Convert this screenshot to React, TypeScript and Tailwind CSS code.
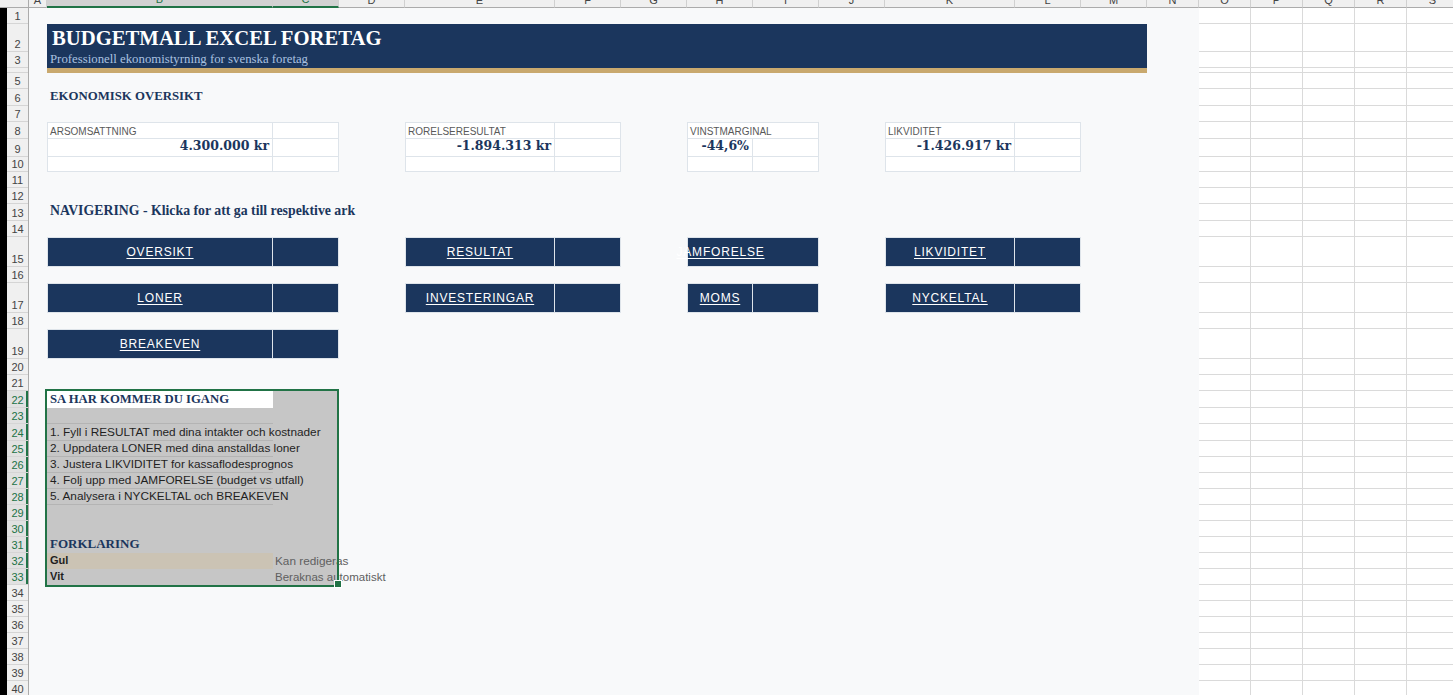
import React from "react";

const COLS = [
  { l: "A", w: "w-[18px]" },
  { l: "B", w: "w-[226px]", sel: true },
  { l: "C", w: "w-[66px]", sel: true },
  { l: "D", w: "w-[66px]" },
  { l: "E", w: "w-[150px]" },
  { l: "F", w: "w-[66px]" },
  { l: "G", w: "w-[66px]" },
  { l: "H", w: "w-[66px]" },
  { l: "I", w: "w-[66px]" },
  { l: "J", w: "w-[66px]" },
  { l: "K", w: "w-[130px]" },
  { l: "L", w: "w-[66px]" },
  { l: "M", w: "w-[66px]" },
  { l: "N", w: "w-[52px]" },
  { l: "O", w: "w-[52px]" },
  { l: "P", w: "w-[52px]" },
  { l: "Q", w: "w-[52px]" },
  { l: "R", w: "w-[52px]" },
  { l: "S", w: "w-[52px]" },
];

// row heights, rows 1..40
const ROWS = [
  "h-[16px]", "h-[28px]", "h-[16px]", "h-[5px]", "h-[16px]", "h-[17px]", "h-[16px]", "h-[17px]",
  "h-[18px]", "h-[15px]", "h-[16px]", "h-[16px]", "h-[17px]", "h-[16px]", "h-[30px]", "h-[16px]",
  "h-[30px]", "h-[16px]", "h-[30px]", "h-[16px]", "h-[16px]", "h-[17px]", "h-[16px]", "h-[17px]",
  "h-[16px]", "h-[16px]", "h-[16px]", "h-[16px]", "h-[16px]", "h-[16px]", "h-[16px]", "h-[16px]",
  "h-[16px]", "h-[16px]", "h-[16px]", "h-[16px]", "h-[16px]", "h-[16px]", "h-[16px]", "h-[16px]",
];

const KPIS = [
  { label: "ARSOMSATTNING", value: "4.300.000 kr", pos: "col-start-2 col-span-2" },
  { label: "RORELSERESULTAT", value: "-1.894.313 kr", pos: "col-start-5 col-span-2" },
  { label: "VINSTMARGINAL", value: "-44,6%", pos: "col-start-8 col-span-2", merged: true },
  { label: "LIKVIDITET", value: "-1.426.917 kr", pos: "col-start-11 col-span-2" },
];

const NAV = [
  { t: "OVERSIKT", pos: "col-start-2 col-span-2 row-start-15" },
  { t: "RESULTAT", pos: "col-start-5 col-span-2 row-start-15" },
  { t: "JAMFORELSE", pos: "col-start-8 col-span-2 row-start-15", noDiv: true },
  { t: "LIKVIDITET", pos: "col-start-11 col-span-2 row-start-15" },
  { t: "LONER", pos: "col-start-2 col-span-2 row-start-17" },
  { t: "INVESTERINGAR", pos: "col-start-5 col-span-2 row-start-17" },
  { t: "MOMS", pos: "col-start-8 col-span-2 row-start-17" },
  { t: "NYCKELTAL", pos: "col-start-11 col-span-2 row-start-17" },
  { t: "BREAKEVEN", pos: "col-start-2 col-span-2 row-start-19" },
];

const STEPS = [
  "1. Fyll i RESULTAT med dina intakter och kostnader",
  "2. Uppdatera LONER med dina anstalldas loner",
  "3. Justera LIKVIDITET for kassaflodesprognos",
  "4. Folj upp med JAMFORELSE (budget vs utfall)",
  "5. Analysera i NYCKELTAL och BREAKEVEN",
];

const serif = "font-['Liberation_Serif','Times_New_Roman',serif]";
const sans = "font-['Liberation_Sans',Arial,sans-serif]";

function KpiCard({ k }: { k: (typeof KPIS)[number] }) {
  const cell = "border-r border-b border-[#dee4ea]";
  return (
    <div className={`${k.pos} row-start-8 row-span-3 grid grid-cols-subgrid grid-rows-subgrid border-l border-t border-[#dee4ea] bg-white`}>
      <div className={`${cell} ${k.merged ? "col-span-2" : ""} flex items-end pl-[2px] ${sans} text-[10px] leading-[12px] text-[#595959] whitespace-nowrap`}>
        {k.label}
      </div>
      {!k.merged && <div className={cell} />}
      <div className={`${cell} flex items-end justify-end pr-[3px] pb-[3px] font-['DejaVu_Serif',serif] font-bold text-[12.5px] leading-[14px] text-[#1b365d] whitespace-nowrap`}>
        {k.value}
      </div>
      <div className={cell} />
      <div className={cell} />
      <div className={cell} />
    </div>
  );
}

function NavButton({ n }: { n: (typeof NAV)[number] }) {
  return (
    <div className={`${n.pos} grid grid-cols-subgrid border border-[#dee4ea] bg-[#1b365d]`}>
      <div className={`flex items-center justify-center whitespace-nowrap ${n.noDiv ? "" : "border-r border-[#dee4ea]"}`}>
        <span className={`${sans} text-[12px] leading-[14px] tracking-[0.8px] text-white underline underline-offset-2 decoration-1`}>
          {n.t}
        </span>
      </div>
      <div />
    </div>
  );
}

export default function App() {
  return (
    <div className="w-[1453px] h-[695px] overflow-hidden bg-white">
      {/* column headers */}
      <div className="flex h-[8px]">
        <div className="w-[29px] shrink-0 bg-[#f0f0f0] border-r border-b border-[#ababab]" />
        {COLS.map((c) => (
          <div
            key={c.l}
            className={`${c.w} shrink-0 h-[8px] overflow-hidden flex items-end justify-center border-r border-r-[#d0d0d0] ${sans} text-[11px] ${
              c.sel ? "bg-[#d2d2d2] text-[#217346] border-b-2 border-b-[#217346]" : "bg-[#f0f0f0] text-[#444] border-b border-b-[#ababab]"
            }`}
          >
            <span className="leading-[11px] mb-[1px]">{c.l}</span>
          </div>
        ))}
      </div>

      <div className="flex">
        <div className="w-[7px] shrink-0 bg-black" />
        {/* row headers */}
        <div className="w-[22px] shrink-0 flex flex-col border-r border-[#ababab] bg-[#f0f0f0]">
          {ROWS.map((h, i) => {
            const sel = i >= 21 && i <= 32;
            return (
              <div
                key={i}
                className={`${h} flex items-end justify-center overflow-hidden border-b border-[#d5d5d5] ${sans} text-[11px] leading-[14px] ${
                  sel ? "bg-[#e1e1e1] text-[#217346] shadow-[inset_-2px_0_0_#217346]" : "text-[#444]"
                }`}
              >
                {i === 3 ? "" : i + 1}
              </div>
            );
          })}
        </div>

        {/* sheet area A..N */}
        <div className="w-[1170px] shrink-0 grid bg-[#f8f9fa] grid-cols-[18px_226px_66px_66px_150px_66px_66px_66px_66px_66px_130px_66px_66px_52px] grid-rows-[16px_28px_16px_5px_16px_17px_16px_17px_18px_15px_16px_16px_17px_16px_30px_16px_30px_16px_30px_16px_16px_17px_16px_17px_repeat(16,16px)]">
          {/* title band */}
          <div className="col-start-2 col-span-12 row-start-2 row-span-2 grid grid-rows-subgrid bg-[#1b365d]">
            <div className={`flex items-end pl-[5px] pb-[3px] ${serif} font-bold text-[20.7px] leading-[22px] text-white`}>
              BUDGETMALL EXCEL FORETAG
            </div>
            <div className={`flex items-end pl-[3px] pb-[2px] ${serif} text-[12.8px] leading-[13px] text-[#a9c1e0]`}>
              Professionell ekonomistyrning for svenska foretag
            </div>
          </div>
          <div className="col-start-2 col-span-12 row-start-4 bg-[#c9a96e]" />

          <div className={`col-start-2 col-span-4 row-start-6 flex items-end pl-[3px] pb-[3px] ${serif} font-bold text-[12.8px] leading-[14px] text-[#1b365d] whitespace-nowrap`}>
            EKONOMISK OVERSIKT
          </div>

          {KPIS.map((k) => (
            <KpiCard key={k.label} k={k} />
          ))}

          <div className={`col-start-2 col-span-6 row-start-13 flex items-end pl-[3px] pb-[3px] ${serif} font-bold text-[13.8px] leading-[14px] text-[#1b365d] whitespace-nowrap`}>
            NAVIGERING - Klicka for att ga till respektive ark
          </div>

          {NAV.map((n) => (
            <NavButton key={n.t} n={n} />
          ))}

          {/* selected block B22:C33 */}
          <div className="col-start-2 col-span-2 row-start-22 row-span-12 relative grid grid-cols-subgrid grid-rows-subgrid bg-[#c6c6c6]">
            <div className={`col-start-1 row-start-1 bg-white flex items-end pl-[3px] pb-[2px] ${serif} font-bold text-[12.7px] leading-[14px] text-[#1b365d] whitespace-nowrap`}>
              SA HAR KOMMER DU IGANG
            </div>
            <div className="col-start-1 row-start-2 border-b border-[#b4b4b4]" />
            {STEPS.map((s, i) => (
              <div
                key={s}
                className={`col-start-1 ${["row-start-3", "row-start-4", "row-start-5", "row-start-6", "row-start-7"][i]} border-b border-[#b4b4b4] flex items-end pl-[3px] pb-[1px] ${sans} text-[11.8px] leading-[14px] text-[#1f1f1f] whitespace-nowrap overflow-visible`}
              >
                {s}
              </div>
            ))}
            <div className={`col-start-1 row-start-10 flex items-end pl-[3px] pb-[2px] ${serif} font-bold text-[13px] leading-[14px] text-[#1b365d] whitespace-nowrap`}>
              FORKLARING
            </div>
            <div className={`col-start-1 row-start-11 bg-[#cbc3b4] flex items-end pl-[3px] pb-[2px] ${sans} font-bold text-[11px] leading-[13px] text-[#1f1f1f]`}>
              Gul
            </div>
            <div className={`col-start-2 row-start-11 flex items-end pl-[2px] pb-[1px] ${sans} text-[11.8px] leading-[14px] text-[#5f5f5f] whitespace-nowrap`}>
              Kan redigeras
            </div>
            <div className={`col-start-1 row-start-12 flex items-end pl-[3px] pb-[2px] ${sans} font-bold text-[11px] leading-[13px] text-[#1f1f1f]`}>
              Vit
            </div>
            <div className={`col-start-2 row-start-12 flex items-end pl-[2px] pb-[1px] ${sans} text-[11.5px] leading-[14px] text-[#5f5f5f] whitespace-nowrap`}>
              Beraknas automatiskt
            </div>

            <div className="absolute -left-[2px] -top-[2px] right-0 -bottom-[2px] border-2 border-[#217346] pointer-events-none" />
            <div className="absolute -right-[3px] -bottom-[3px] w-[8px] h-[8px] bg-[#217346] border border-white pointer-events-none" />
          </div>
        </div>

        {/* plain cells O..S */}
        <div className="flex flex-col overflow-hidden">
          {ROWS.map((h, i) => (
            <div key={i} className={`${h} flex`}>
              {[0, 1, 2, 3, 4].map((j) => (
                <div key={j} className="w-[52px] shrink-0 border-r border-b border-[#dadada] bg-white" />
              ))}
            </div>
          ))}
        </div>
      </div>
    </div>
  );
}
